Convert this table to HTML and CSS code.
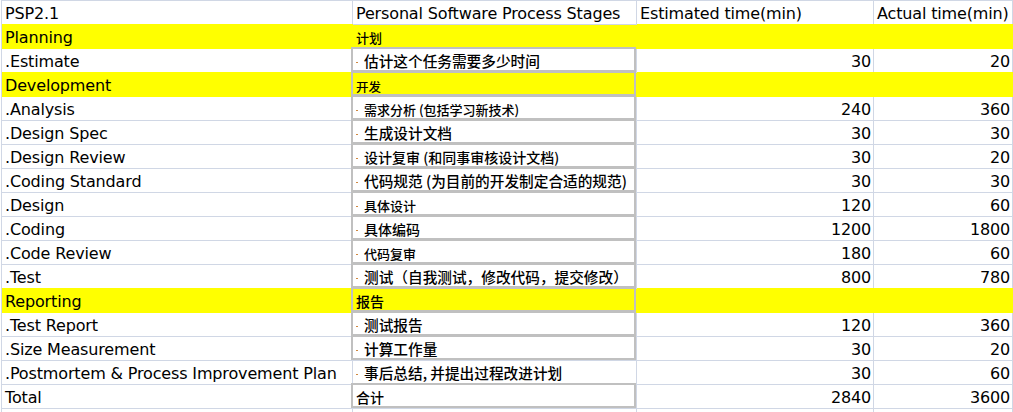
FILE: index.html
```html
<!DOCTYPE html>
<html lang="zh-CN">
<head>
<meta charset="utf-8">
<title>PSP2.1</title>
<link rel="stylesheet" href="styles.css">
</head>
<body>
<div class="sheet">
  <div class="row">
    <div class="cell">PSP2.1</div>
    <div class="cell b">Personal Software Process Stages</div>
    <div class="cell">Estimated time(min)</div>
    <div class="cell">Actual time(min)</div>
  </div>
  <div class="row hl">
    <div class="cell">Planning</div>
    <div class="cell b s13">计划</div>
    <div class="cell"></div>
    <div class="cell"></div>
  </div>
  <div class="row">
    <div class="cell">.Estimate</div>
    <div class="cell b box s15"><span class="dot"></span>估计这个任务需要多少时间</div>
    <div class="cell num">30</div>
    <div class="cell num">20</div>
  </div>
  <div class="row hl">
    <div class="cell">Development</div>
    <div class="cell b box s12">开发</div>
    <div class="cell"></div>
    <div class="cell"></div>
  </div>
  <div class="row">
    <div class="cell">.Analysis</div>
    <div class="cell b box s13"><span class="dot"></span>需求分析 (包括学习新技术)</div>
    <div class="cell num">240</div>
    <div class="cell num">360</div>
  </div>
  <div class="row">
    <div class="cell">.Design Spec</div>
    <div class="cell b box s15"><span class="dot"></span>生成设计文档</div>
    <div class="cell num">30</div>
    <div class="cell num">30</div>
  </div>
  <div class="row">
    <div class="cell">.Design Review</div>
    <div class="cell b box s14"><span class="dot"></span>设计复审 (和同事审核设计文档)</div>
    <div class="cell num">30</div>
    <div class="cell num">20</div>
  </div>
  <div class="row">
    <div class="cell">.Coding Standard</div>
    <div class="cell b box s15"><span class="dot"></span>代码规范 (为目前的开发制定合适的规范)</div>
    <div class="cell num">30</div>
    <div class="cell num">30</div>
  </div>
  <div class="row">
    <div class="cell">.Design</div>
    <div class="cell b box s13"><span class="dot"></span>具体设计</div>
    <div class="cell num">120</div>
    <div class="cell num">60</div>
  </div>
  <div class="row">
    <div class="cell">.Coding</div>
    <div class="cell b box s14"><span class="dot"></span>具体编码</div>
    <div class="cell num">1200</div>
    <div class="cell num">1800</div>
  </div>
  <div class="row">
    <div class="cell">.Code Review</div>
    <div class="cell b box s13"><span class="dot"></span>代码复审</div>
    <div class="cell num">180</div>
    <div class="cell num">60</div>
  </div>
  <div class="row">
    <div class="cell">.Test</div>
    <div class="cell b box s15"><span class="dot"></span>测试（自我测试，修改代码，提交修改）</div>
    <div class="cell num">800</div>
    <div class="cell num">780</div>
  </div>
  <div class="row hl">
    <div class="cell">Reporting</div>
    <div class="cell b box s14">报告</div>
    <div class="cell"></div>
    <div class="cell"></div>
  </div>
  <div class="row">
    <div class="cell">.Test Report</div>
    <div class="cell b box s15"><span class="dot"></span>测试报告</div>
    <div class="cell num">120</div>
    <div class="cell num">360</div>
  </div>
  <div class="row">
    <div class="cell">.Size Measurement</div>
    <div class="cell b box s15"><span class="dot"></span>计算工作量</div>
    <div class="cell num">30</div>
    <div class="cell num">20</div>
  </div>
  <div class="row">
    <div class="cell">.Postmortem &amp; Process Improvement Plan</div>
    <div class="cell b s15"><span class="dot"></span>事后总结, 并提出过程改进计划</div>
    <div class="cell num">30</div>
    <div class="cell num">60</div>
  </div>
  <div class="row">
    <div class="cell">Total</div>
    <div class="cell b box s14">合计</div>
    <div class="cell num">2840</div>
    <div class="cell num">3600</div>
  </div>
  <div class="row tail">
    <div class="cell"></div>
    <div class="cell"></div>
    <div class="cell"></div>
    <div class="cell"></div>
  </div>
</div>
</body>
</html>
```

FILE: styles.css
```css
html, body {
  margin: 0;
  padding: 0;
  background: #ffffff;
  overflow: hidden;
}

.sheet {
  margin-left: 1px;
  width: 1012px;
  border-left: 1px solid #d0d7e5;
  border-top: 1px solid #d0d7e5;
  box-sizing: border-box;
  display: flex;
  flex-direction: column;
  font-family: "DejaVu Sans", "Noto Sans CJK SC", sans-serif;
  font-size: 16px;
  letter-spacing: -0.15px;
  color: #000000;
}

.row {
  display: grid;
  grid-template-columns: 351px 284px 237px 139px;
  height: 24px;
}

.row.tail {
  height: 3px;
}

.cell {
  box-sizing: border-box;
  height: 24px;
  border-right: 1px solid #d0d7e5;
  border-bottom: 1px solid #d0d7e5;
  display: flex;
  align-items: flex-end;
  padding: 0 3px 1px 3px;
  line-height: 18px;
  white-space: nowrap;
}

.row.tail .cell {
  height: 3px;
  border-bottom: 0;
  padding: 0;
}

.cell.num {
  justify-content: flex-end;
  padding-right: 2px;
}

.cell.b {
  position: relative;
  padding-left: 3px;
}

.cell.box::before {
  content: "";
  position: absolute;
  top: -2px;
  left: -2px;
  right: 0;
  bottom: 0;
  border: 2px solid #c0c0c0;
  pointer-events: none;
}

.row.hl {
  box-shadow: 0 -1px 0 #ffff00;
}

.row.hl .cell {
  background: #ffff00;
  border-color: #ffff00;
}

.s12, .s13, .s14, .s15 {
  font-family: "Noto Sans CJK SC", "DejaVu Sans", sans-serif;
  font-weight: 500;
  letter-spacing: 0;
  padding-bottom: 2px;
}

.s12 { font-size: 12.5px; padding-bottom: 0; }
.s13 { font-size: 13px; padding-bottom: 1px; }
.s14 { font-size: 14px; }
.s15 { font-size: 14.67px; }

.dot {
  display: inline-block;
  width: 2px;
  height: 1px;
  background: #d08840;
  margin-right: 6px;
  margin-bottom: 7px;
  align-self: flex-end;
}

.s12 .dot { margin-bottom: 10px; }
.s13 .dot { margin-bottom: 8px; }
```
